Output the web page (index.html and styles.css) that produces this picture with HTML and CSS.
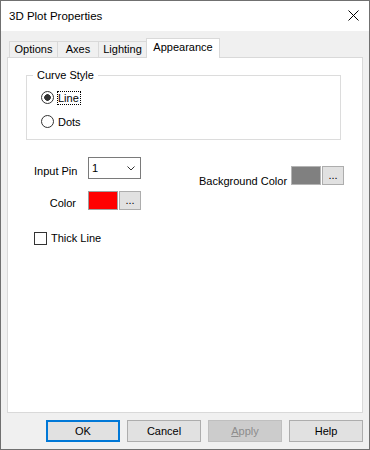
FILE: index.html
```html
<!DOCTYPE html>
<html lang="en">

<head>
    <meta charset="UTF-8">
    <title>3D Plot Properties</title>
    <link rel="stylesheet" href="styles.css">
</head>

<body>
    <div class="window">
        <div class="titlebar">
            <span class="title">3D Plot Properties</span>
            <svg class="close" width="11" height="11" viewBox="0 0 11 11">
                <path d="M0.5 0.5 L10.5 10.5 M10.5 0.5 L0.5 10.5" stroke="#000" stroke-width="1" fill="none" />
            </svg>
        </div>

        <div class="tabs">
            <div class="tab tab-options">Options</div>
            <div class="tab tab-axes">Axes</div>
            <div class="tab tab-lighting">Lighting</div>
            <div class="tab tab-appearance active">Appearance</div>
        </div>

        <div class="panel">
            <div class="group">
                <span class="group-title">Curve Style</span>
                <div class="radio-row">
                    <span class="radio checked"></span>
                    <span class="radio-label focused">Line</span>
                </div>
                <div class="radio-row">
                    <span class="radio"></span>
                    <span class="radio-label">Dots</span>
                </div>
            </div>

            <div class="settings">
                <div class="fields">
                    <span class="field-label label-pin">Input Pin</span>
                    <div class="select">
                        <span>1</span>
                        <svg width="8" height="5" viewBox="0 0 8 5">
                            <polyline points="0.5,0.5 4,4 7.5,0.5" stroke="#333" stroke-width="1" fill="none" />
                        </svg>
                    </div>

                    <span class="field-label label-color">Color</span>
                    <div class="color-pick">
                        <span class="swatch swatch-red"></span>
                        <span class="dots-btn">...</span>
                    </div>

                    <div class="checkbox-row">
                        <span class="checkbox"></span>
                        <span>Thick Line</span>
                    </div>
                </div>

                <div class="bg-color">
                    <span class="bg-label">Background Color</span>
                    <div class="color-pick">
                        <span class="swatch swatch-gray"></span>
                        <span class="dots-btn">...</span>
                    </div>
                </div>
            </div>
        </div>

        <div class="footer">
            <button class="btn btn-default">OK</button>
            <button class="btn">Cancel</button>
            <button class="btn btn-disabled"><u>A</u>pply</button>
            <button class="btn">Help</button>
        </div>
    </div>
</body>

</html>
```

FILE: styles.css
```css
:root {
    --window-border: #707070;
    --face-color: #f0f0f0;
    --tab-border: #d9d9d9;
    --group-border: #dcdcdc;
    --button-face: #e1e1e1;
    --button-border: #adadad;
    --focus-color: #0078d7;
    --control-dark: #333333;
}

* {
    box-sizing: border-box;
}

body {
    margin: 0;
    font-family: "Liberation Sans", Arial, sans-serif;
    font-size: 11px;
    color: #000;
}

.window {
    width: 370px;
    height: 450px;
    border: 1px solid var(--window-border);
    background: var(--face-color);
    display: flex;
    flex-direction: column;
}

/* title bar */
.titlebar {
    height: 30px;
    background: #fff;
    display: flex;
    align-items: center;
    justify-content: space-between;
    padding: 0 10px 0 8px;
}

.title {
    font-size: 11.5px;
}

.close {
    margin-top: -1px;
}

/* tabs */
.tabs {
    display: flex;
    align-items: flex-end;
    padding: 7px 0 0 8px;
}

.tab {
    height: 16px;
    line-height: 15px;
    text-align: center;
    border: 1px solid var(--tab-border);
    border-bottom: none;
    background: var(--face-color);
    margin-left: -1px;
}

.tab:first-child {
    margin-left: 0;
}

.tab-options {
    width: 49px;
}

.tab-axes {
    width: 42px;
}

.tab-lighting {
    width: 49px;
}

.tab-appearance {
    width: 74px;
}

.tab.active {
    position: relative;
    z-index: 1;
    height: 20px;
    line-height: 17px;
    margin-bottom: -1px;
    background: #fff;
}

.panel {
    flex: 1;
    margin: 0 6px;
    border: 1px solid var(--tab-border);
    background: #fff;
}

/* curve style group */
.group {
    position: relative;
    width: 315px;
    height: 65px;
    margin: 17px 0 0 18px;
    padding: 15px 0 0 14px;
    border: 1px solid var(--group-border);
    display: flex;
    flex-direction: column;
    gap: 11px;
}

.group-title {
    position: absolute;
    top: -7px;
    left: 6px;
    padding: 0 4px;
    line-height: 13px;
    background: #fff;
}

.radio-row {
    display: flex;
    align-items: center;
    height: 13px;
}

.radio {
    width: 13px;
    height: 13px;
    border: 1px solid var(--control-dark);
    border-radius: 50%;
    background: #fff;
}

.radio.checked {
    background: radial-gradient(circle, var(--control-dark) 3px, #fff 3.6px);
}

.radio-label {
    margin-left: 3px;
    padding: 0 1px 0 0;
    line-height: 12px;
    border: 1px solid transparent;
}

.radio-label.focused {
    border: 1px dotted #000;
}

/* pin / colour settings */
.settings {
    display: flex;
    align-items: flex-start;
    margin-top: 17px;
    padding-left: 26px;
}

.fields {
    display: grid;
    grid-template-columns: 42px 53px;
    column-gap: 12px;
    row-gap: 12px;
    align-items: start;
}

.field-label {
    line-height: 13px;
    text-align: right;
    white-space: nowrap;
}

.label-pin {
    padding-top: 8px;
}

.label-color {
    padding-top: 6px;
}

.select {
    height: 22px;
    border: 1px solid #7a7a7a;
    background: #fff;
    display: flex;
    align-items: center;
    justify-content: space-between;
    padding: 0 5px 0 3px;
}

.color-pick {
    display: flex;
    gap: 1px;
}

.swatch {
    width: 30px;
    height: 19px;
    border: 1px solid #a0a0a0;
}

.swatch-red {
    background: #ff0000;
}

.swatch-gray {
    background: #808080;
    border-color: #b4b4b4;
}

.dots-btn {
    width: 22px;
    height: 19px;
    border: 1px solid var(--button-border);
    background: var(--button-face);
    text-align: center;
    line-height: 17px;
}

.checkbox-row {
    grid-column: 1 / span 2;
    margin-top: 10px;
    display: flex;
    align-items: center;
    gap: 4px;
    line-height: 13px;
}

.checkbox {
    width: 13px;
    height: 13px;
    border: 1px solid var(--control-dark);
    background: #fff;
}

.bg-color {
    display: flex;
    align-items: flex-start;
    gap: 4px;
    margin: 9px 0 0 58px;
}

.bg-label {
    padding-top: 9px;
    line-height: 13px;
    white-space: nowrap;
}

/* dialog buttons */
.footer {
    height: 36px;
    display: flex;
    justify-content: flex-end;
    gap: 7px;
    padding: 7px 6px 7px 0;
}

.btn {
    width: 74px;
    height: 22px;
    padding: 0;
    border: 1px solid var(--button-border);
    background: var(--button-face);
    font-family: inherit;
    font-size: 11px;
    color: #000;
}

.btn-default {
    border: 2px solid var(--focus-color);
}

.btn-disabled {
    background: #cccccc;
    border-color: #bfbfbf;
    color: #8d8d8d;
}
```
